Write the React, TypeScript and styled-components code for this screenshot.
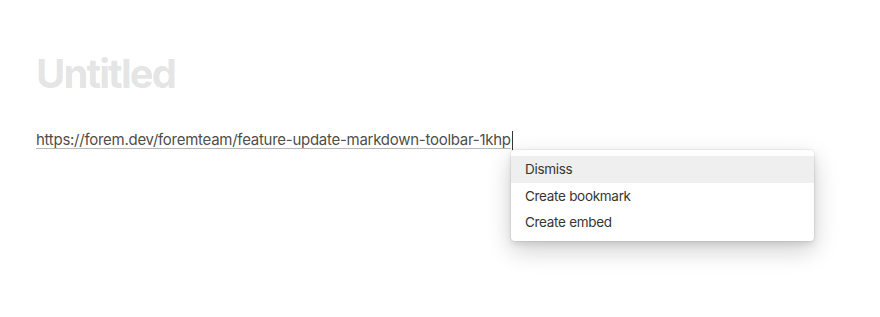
import React from "react";
import styled, { createGlobalStyle } from "styled-components";

const Global = createGlobalStyle`
  html, body { margin: 0; padding: 0; background: #fff; }
  body { font-family: Inter, "Noto Sans", "Liberation Sans", sans-serif; -webkit-font-smoothing: antialiased; }
`;

const Page = styled.div`
  width: 880px;
  height: 317px;
  box-sizing: border-box;
  padding: 50px 36px 0 36px;
  position: relative;
  overflow: hidden;
`;

const Title = styled.h1`
  margin: 0;
  font-size: 40px;
  line-height: 48px;
  font-weight: 700;
  color: rgba(55, 53, 47, 0.15);
  letter-spacing: -1.9px;
`;

const Block = styled.div`
  margin-top: 30px;
  display: flex;
  align-items: center;
`;

const Link = styled.span`
  font-size: 15px;
  line-height: 24px;
  letter-spacing: -0.27px;
  color: rgba(55, 53, 47, 0.9);
  text-decoration: underline;
  text-decoration-color: rgba(55, 53, 47, 0.35);
  text-underline-offset: 3px;
  text-decoration-thickness: 1px;
`;

const Caret = styled.span`
  display: inline-block;
  width: 1px;
  height: 19px;
  background: #37352f;
  margin-left: 1px;
`;

const Menu = styled.div`
  position: absolute;
  left: 511px;
  top: 150px;
  width: 303px;
  padding: 6px 0 5px;
  background: #fff;
  border-radius: 4px;
  box-shadow: rgba(15, 15, 15, 0.05) 0 0 0 1px, rgba(15, 15, 15, 0.1) 0 3px 6px,
    rgba(15, 15, 15, 0.2) 0 9px 24px;
`;

const Item = styled.div<{ $active?: boolean }>`
  height: 26.5px;
  display: flex;
  align-items: center;
  padding: 0 14px;
  font-size: 13.5px;
  letter-spacing: -0.3px;
  color: rgb(55, 53, 47);
  background: ${(p) => (p.$active ? "rgba(55, 53, 47, 0.08)" : "transparent")};
`;

export default function App() {
  return (
    <>
      <Global />
      <Page>
        <Title>Untitled</Title>
        <Block>
          <Link>https://forem.dev/foremteam/feature-update-markdown-toolbar-1khp</Link>
          <Caret />
        </Block>
        <Menu>
          <Item $active>Dismiss</Item>
          <Item>Create bookmark</Item>
          <Item>Create embed</Item>
        </Menu>
      </Page>
    </>
  );
}
